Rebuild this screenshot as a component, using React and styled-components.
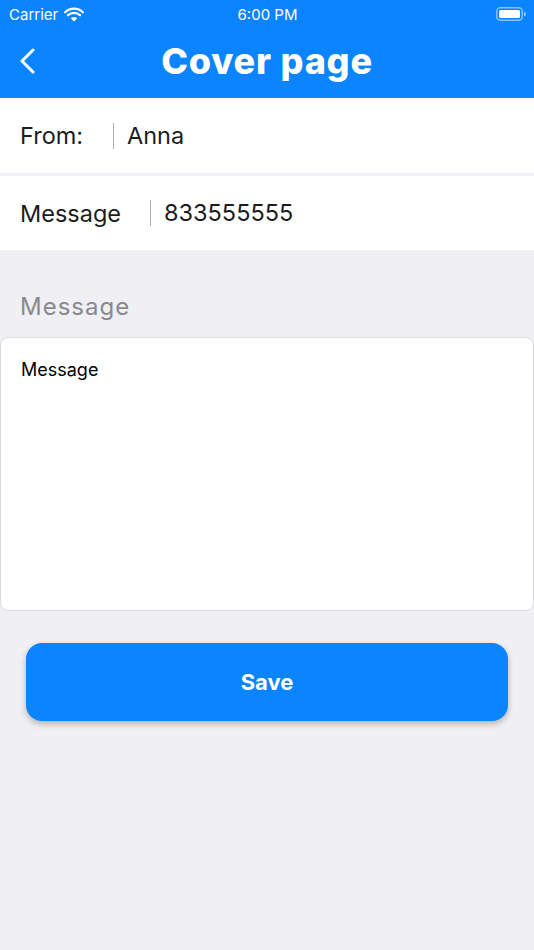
import React from "react"
import styled, { createGlobalStyle } from "styled-components"

const Global = createGlobalStyle`
  html, body {
    margin: 0;
    padding: 0;
    background: #efeff4;
  }
  * {
    box-sizing: border-box;
  }
`

const Screen = styled.div`
  width: 534px;
  min-height: 950px;
  background: #efeff4;
  font-family: Inter, "Liberation Sans", sans-serif;
  display: flex;
  flex-direction: column;
`

const Header = styled.header`
  background: #0a84ff;
  color: white;
  height: 98px;
  display: flex;
  flex-direction: column;
`

const StatusBar = styled.div`
  height: 28px;
  display: grid;
  grid-template-columns: 1fr auto 1fr;
  align-items: center;
  padding: 0 8px 0 9px;
  font-size: 15px;
  font-family: Inter, "Liberation Sans", sans-serif;

  .left {
    display: flex;
    align-items: center;
    gap: 6px;
  }
  .right {
    display: flex;
    justify-content: flex-end;
  }
`

const NavBar = styled.div`
  flex: 1;
  display: grid;
  grid-template-columns: 60px 1fr 60px;
  align-items: center;
  padding-bottom: 4px;
`

const BackButton = styled.button`
  background: none;
  border: none;
  padding: 0 0 0 19px;
  display: flex;
  align-items: center;
  color: white;
  cursor: pointer;
`

const Title = styled.h1`
  margin: 0;
  text-align: center;
  font-size: 36px;
  font-weight: 800;
  letter-spacing: 0.8px;
`

const Rows = styled.div`
  display: flex;
  flex-direction: column;
  gap: 3px;
  background: #efeff4;
`

const Row = styled.div`
  height: ${p => p.h}px;
  background: white;
  display: flex;
  align-items: center;
  padding-left: 20px;
  font-size: 23.5px;
  color: #1c1c1e;
`

const RowLabel = styled.span`
  width: ${p => p.w}px;
  flex-shrink: 0;
`

const RowValue = styled.span`
  border-left: 1.5px solid #b0b0b4;
  padding-left: 13px;
  line-height: 26px;
`

const SectionLabel = styled.div`
  padding: 42px 20px 16px;
  font-size: 24px;
  color: #8a8a8e;
  letter-spacing: 1px;
`

const TextArea = styled.div`
  height: 274px;
  background: white;
  border: 1px solid #dcdce0;
  border-radius: 8px;
  padding: 21px 20px;
  font-size: 18px;
  color: #000;
`

const SaveButton = styled.button`
  margin: 32px 26px 0;
  height: 78px;
  border: none;
  border-radius: 16px;
  background: #0a84ff;
  color: white;
  font-family: Inter, "Liberation Sans", sans-serif;
  font-size: 22px;
  font-weight: 700;
  box-shadow: 0 3px 6px rgba(0, 0, 0, 0.25);
  cursor: pointer;
`

const Wifi = () => (
  <svg width="20" height="15" viewBox="0 0 20 15">
    <path d="M10 14.5 L6.8 11.2 A4.6 4.6 0 0 1 13.2 11.2 Z" fill="white" />
    <path d="M3.9 8.3 A8.7 8.7 0 0 1 16.1 8.3" stroke="white" strokeWidth="2.3" fill="none" strokeLinecap="round" />
    <path d="M1.2 5.3 A12.6 12.6 0 0 1 18.8 5.3" stroke="white" strokeWidth="2.3" fill="none" strokeLinecap="round" />
  </svg>
)

const Battery = () => (
  <svg width="30" height="14" viewBox="0 0 30 14">
    <rect x="0.75" y="0.75" width="25.5" height="12.5" rx="3.5" fill="none" stroke="rgba(255,255,255,0.5)" strokeWidth="1.5" />
    <rect x="3" y="3" width="21" height="8" rx="1.5" fill="white" />
    <path d="M27.8 4.8 A2.2 2.2 0 0 1 27.8 9.2 Z" fill="rgba(255,255,255,0.5)" />
  </svg>
)

const Chevron = () => (
  <svg width="18" height="26" viewBox="0 0 18 26">
    <path d="M14 2 L3 13 L14 24" stroke="white" strokeWidth="3" fill="none" strokeLinecap="round" strokeLinejoin="round" />
  </svg>
)

const App = () => (
  <Screen>
    <Global />
    <Header>
      <StatusBar>
        <div className="left">
          <span>Carrier</span>
          <Wifi />
        </div>
        <span>6:00 PM</span>
        <div className="right">
          <Battery />
        </div>
      </StatusBar>
      <NavBar>
        <BackButton>
          <Chevron />
        </BackButton>
        <Title>Cover page</Title>
        <span />
      </NavBar>
    </Header>
    <Rows>
      <Row h={75}>
        <RowLabel w={93}>From:</RowLabel>
        <RowValue>Anna</RowValue>
      </Row>
      <Row h={74}>
        <RowLabel w={130}>Message</RowLabel>
        <RowValue>833555555</RowValue>
      </Row>
    </Rows>
    <SectionLabel>Message</SectionLabel>
    <TextArea>Message</TextArea>
    <SaveButton>Save</SaveButton>
  </Screen>
)

export default App
